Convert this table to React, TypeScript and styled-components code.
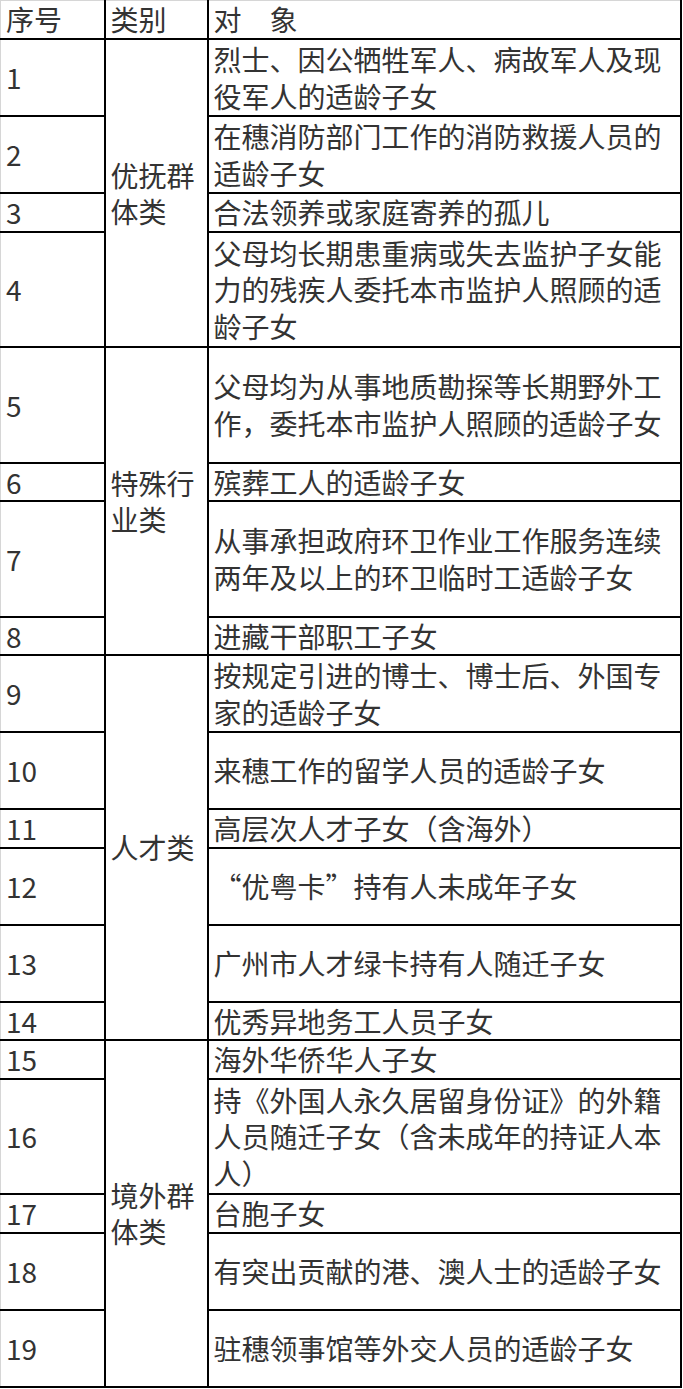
import React from "react";
import styled, { createGlobalStyle } from "styled-components";

const GlobalStyle = createGlobalStyle`
  html, body {
    margin: 0;
    padding: 0;
    background: #fff;
  }
  body {
    font-family: "Noto Sans CJK SC", "Microsoft YaHei", sans-serif;
  }
`;

const unit = 38.5;

interface Item {
  no: number;
  text: React.ReactNode;
  lines: number;
}

interface Group {
  name: string;
  items: Item[];
}

const Quote = styled.span`
  font-feature-settings: "fwid" 1;
`;

const groups: Group[] = [
  {
    name: "优抚群体类",
    items: [
      { no: 1, text: "烈士、因公牺牲军人、病故军人及现役军人的适龄子女", lines: 2 },
      { no: 2, text: "在穗消防部门工作的消防救援人员的适龄子女", lines: 2 },
      { no: 3, text: "合法领养或家庭寄养的孤儿", lines: 1 },
      { no: 4, text: "父母均长期患重病或失去监护子女能力的残疾人委托本市监护人照顾的适龄子女", lines: 3 },
    ],
  },
  {
    name: "特殊行业类",
    items: [
      { no: 5, text: "父母均为从事地质勘探等长期野外工作，委托本市监护人照顾的适龄子女", lines: 3 },
      { no: 6, text: "殡葬工人的适龄子女", lines: 1 },
      { no: 7, text: "从事承担政府环卫作业工作服务连续两年及以上的环卫临时工适龄子女", lines: 3 },
      { no: 8, text: "进藏干部职工子女", lines: 1 },
    ],
  },
  {
    name: "人才类",
    items: [
      { no: 9, text: "按规定引进的博士、博士后、外国专家的适龄子女", lines: 2 },
      { no: 10, text: "来穗工作的留学人员的适龄子女", lines: 2 },
      { no: 11, text: "高层次人才子女（含海外）", lines: 1 },
      {
        no: 12,
        text: (
          <>
            <Quote>“</Quote>优粤卡<Quote>”</Quote>持有人未成年子女
          </>
        ),
        lines: 2,
      },
      { no: 13, text: "广州市人才绿卡持有人随迁子女", lines: 2 },
      { no: 14, text: "优秀异地务工人员子女", lines: 1 },
    ],
  },
  {
    name: "境外群体类",
    items: [
      { no: 15, text: "海外华侨华人子女", lines: 1 },
      { no: 16, text: "持《外国人永久居留身份证》的外籍人员随迁子女（含未成年的持证人本人）", lines: 3 },
      { no: 17, text: "台胞子女", lines: 1 },
      { no: 18, text: "有突出贡献的港、澳人士的适龄子女", lines: 2 },
      { no: 19, text: "驻穗领事馆等外交人员的适龄子女", lines: 2 },
    ],
  },
];

const Table = styled.table`
  width: 682px;
  border-collapse: collapse;
  table-layout: fixed;
  font-size: 28px;
  line-height: 36.5px;
  color: #333;
  border-top: 1px solid #d6d6d6;
  border-left: 1px solid #d6d6d6;
`;

const Row = styled.tr<{ $lines: number }>`
  height: ${(p) => p.$lines * unit}px;
`;

const HeadCell = styled.th`
  font-weight: normal;
  text-align: left;
  vertical-align: middle;
  padding: 0 5px;
  border: 2px solid #000;
  border-top: none;

  &:first-child {
    border-left: none;
  }
`;

const Cell = styled.td`
  text-align: left;
  vertical-align: middle;
  padding: 0 5px;
  border: 2px solid #000;

  &:first-child {
    border-left: none;
  }
`;

export default function App() {
  return (
    <>
      <GlobalStyle />
      <Table>
        <colgroup>
          <col style={{ width: 104 }} />
          <col style={{ width: 103 }} />
          <col />
        </colgroup>
        <thead>
          <Row $lines={1}>
            <HeadCell>序号</HeadCell>
            <HeadCell>类别</HeadCell>
            <HeadCell>对　象</HeadCell>
          </Row>
        </thead>
        <tbody>
          {groups.map((g) =>
            g.items.map((item, i) => (
              <Row key={item.no} $lines={item.lines}>
                <Cell>{item.no}</Cell>
                {i === 0 && <Cell rowSpan={g.items.length}>{g.name}</Cell>}
                <Cell>{item.text}</Cell>
              </Row>
            ))
          )}
        </tbody>
      </Table>
    </>
  );
}
